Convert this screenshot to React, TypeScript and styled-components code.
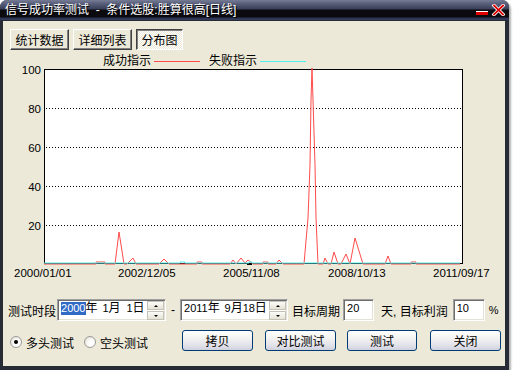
import React from "react";
import styled, { createGlobalStyle } from "styled-components";

const FONT = `"Liberation Sans", "Noto Sans CJK SC", sans-serif`;

const GlobalStyle = createGlobalStyle`
  html, body { margin: 0; padding: 0; background: #ffffff; }
  body { font-family: ${FONT}; font-size: 12px; }
  * { box-sizing: border-box; }
`;

const Window = styled.div`
  width: 509px;
  height: 370px;
  display: flex;
  flex-direction: column;
  background: #272b35;
  border-radius: 7px 7px 0 0;
  box-shadow: 2px 2px 2px rgba(0, 0, 0, 0.3);
  overflow: hidden;
`;

const TitleBar = styled.div`
  height: 20px;
  flex: none;
  display: flex;
  align-items: center;
  padding: 0 4px 0 5px;
  background: linear-gradient(
    #767b95 0px,
    #565c78 4px,
    #3a3f58 9px,
    #0a0a0f 10px,
    #0a0a0f 17px,
    #2b3250 18px,
    #343d5e 20px
  );
  color: #ffffff;
`;

const Title = styled.div`
  flex: 1;
  font-size: 12px;
  line-height: 12px;
  white-space: pre;
  text-shadow: 1px 1px 0 #000;
`;

const Client = styled.div`
  flex: 1;
  margin: 1px 4px 4px 3px;
  background: #ece9d8;
  display: flex;
  flex-direction: column;
`;

const TabRow = styled.div`
  display: flex;
  gap: 4px;
  padding: 8px 0 0 7px;
`;

const TabButton = styled.button<{ $w: number; $active?: boolean }>`
  width: ${(p) => p.$w}px;
  height: 21px;
  padding: 0;
  font: 12px ${FONT};
  color: #000;
  background: ${(p) =>
    p.$active
      ? "conic-gradient(#ffffff 25%, #ece9d8 0 50%, #ffffff 0 75%, #ece9d8 0)"
      : "#ece9d8"};
  background-size: 2px 2px;
  border: 1px solid;
  border-color: ${(p) =>
    p.$active ? "#404040 #ffffff #ffffff #404040" : "#ffffff #404040 #404040 #ffffff"};
  box-shadow: ${(p) => (p.$active ? "inset 1px 1px #808080" : "inset -1px -1px #808080")};
`;

const ChartSvg = styled.svg`
  display: block;
  flex: none;
`;

const Row = styled.div<{ $top: number; $h: number }>`
  display: flex;
  align-items: center;
  height: ${(p) => p.$h}px;
  margin-top: ${(p) => p.$top}px;
  padding-left: 5px;
`;

const Label = styled.span<{ $ml?: number }>`
  margin-left: ${(p) => p.$ml ?? 0}px;
  font-size: 12px;
  white-space: pre;
`;

const Sunken = styled.div<{ $w: number; $ml: number }>`
  width: ${(p) => p.$w}px;
  height: 22px;
  margin-left: ${(p) => p.$ml}px;
  background: #ffffff;
  border: 1px solid;
  border-color: #a0a0a0 #ffffff #ffffff #a0a0a0;
  box-shadow: inset 1px 1px #6e6e6e, inset -1px -1px #e4e2d6;
  display: flex;
  align-items: flex-start;
  padding: 2px 0 0 3px;
`;

const Digits = styled.span<{ $w?: number; $sel?: boolean }>`
  display: inline-block;
  ${(p) => (p.$w ? `width: ${p.$w}px; text-align: right;` : "")}
  font-size: 11px;
  line-height: 13px;
  color: ${(p) => (p.$sel ? "#ffffff" : "#000")};
  background: ${(p) => (p.$sel ? "#316ac5" : "transparent")};
`;

const Unit = styled.span`
  font-size: 12px;
  line-height: 13px;
`;

const Spinner = styled.div`
  margin: -1px 1px 0 auto;
  width: 17px;
  height: 19px;
  display: flex;
  flex-direction: column;
  gap: 1px;
`;

const SpinBtn = styled.div<{ $up?: boolean }>`
  flex: 1;
  background: linear-gradient(#fbfbf8, #e6e3d6);
  border: 1px solid #c4c2b6;
  display: flex;
  align-items: center;
  justify-content: center;
  &::after {
    content: "";
    width: 0;
    height: 0;
    border-left: 2px solid transparent;
    border-right: 2px solid transparent;
    ${(p) => (p.$up ? "border-bottom: 2px solid #000;" : "border-top: 2px solid #000;")}
  }
`;

const Dash = styled.span`
  width: 14px;
  text-align: center;
  font-size: 12px;
`;

const RadioItem = styled.label<{ $ml: number }>`
  display: flex;
  align-items: center;
  gap: 4px;
  margin: 3px 0 0 ${(p) => p.$ml}px;
  font-size: 12px;
`;

const RadioDot = styled.span<{ $checked?: boolean }>`
  width: 12px;
  height: 12px;
  border-radius: 50%;
  border: 1px solid #9a9a9a;
  background: radial-gradient(circle at 65% 65%, #ffffff 30%, #dcd9cc 100%);
  display: flex;
  align-items: center;
  justify-content: center;
  &::after {
    content: "";
    width: 4px;
    height: 4px;
    border-radius: 50%;
    background: ${(p) => (p.$checked ? "#000" : "transparent")};
  }
`;

const PushButton = styled.button<{ $w: number; $ml: number }>`
  width: ${(p) => p.$w}px;
  height: 21px;
  margin-left: ${(p) => p.$ml}px;
  padding: 0;
  font: 12px ${FONT};
  color: #000;
  border: 1px solid #003c74;
  border-radius: 3px;
  background: linear-gradient(#ffffff 0%, #f4f4f2 35%, #e2e2ea 75%, #cfd1de 100%);
`;

const toY = (v: number) => 264 - v * 1.95;

const redPts: [number, number][] = [
  [44, 264], [96, 264], [96, 262], [105, 262], [105, 264], [115, 264], [119, 232],
  [124, 264], [127, 264], [133, 258], [136, 264], [159, 264], [164, 259], [169, 264],
  [180, 264], [197, 264], [197, 262], [202, 262], [202, 264], [230, 264], [233, 260],
  [236, 264], [241, 258], [245, 263], [248, 260], [253, 264], [263, 264], [263, 262],
  [268, 262], [268, 264], [276, 264], [279, 260], [283, 264], [304, 264], [308, 218],
  [310, 165], [311, 100], [312, 68], [313, 100], [315, 165], [316, 218], [318, 264],
  [323, 264], [325, 258], [328, 264], [331, 264], [334, 252], [338, 264], [341, 264],
  [346, 254], [350, 264], [355, 238], [363, 264], [385, 264], [388, 256], [391, 264],
  [411, 264], [411, 262], [416, 262], [416, 264], [460, 264],
];

const cyanPts: [number, number][] = [
  [44, 263], [180, 263], [180, 262], [185, 262], [185, 263], [249, 263], [249, 262],
  [252, 262], [252, 263], [460, 263],
];

const pts = (list: [number, number][]) => list.map(([x, y]) => `${x},${y}`).join(" ");

const xLabels: [number, string][] = [
  [14, "2000/01/01"],
  [118, "2002/12/05"],
  [223, "2005/11/08"],
  [328, "2008/10/13"],
  [433, "2011/09/17"],
];

function Chart() {
  return (
    <ChartSvg width={502} height={240} viewBox="3 50 502 240">
      <g fontFamily={FONT} fontSize={12} fill="#000">
        <text x={103} y={65}>成功指示</text>
        <text x={209} y={65}>失败指示</text>
      </g>
      <line x1={154} y1={61.5} x2={200} y2={61.5} stroke="#ff4b4b" />
      <line x1={260} y1={61.5} x2={306} y2={61.5} stroke="#4ff0f0" />
      <rect x={44.5} y={69.5} width={418} height={194} fill="#ffffff" stroke="#000" />
      {[20, 40, 60, 80].map((v) => (
        <line
          key={v}
          x1={46}
          x2={462}
          y1={toY(v) + 0.5}
          y2={toY(v) + 0.5}
          stroke="#000"
          strokeDasharray="1 2"
        />
      ))}
      <g fontFamily={FONT} fontSize={11.5} fill="#000">
        {[100, 80, 60, 40, 20].map((v) => (
          <text key={v} x={41} y={toY(v) + 4.5} textAnchor="end">
            {v}
          </text>
        ))}
        {xLabels.map(([x, t]) => (
          <text key={t} x={x} y={276.5}>
            {t}
          </text>
        ))}
      </g>
      <polyline points={pts(redPts)} fill="none" stroke="#ff4b4b" strokeWidth={1} />
      <polyline points={pts(cyanPts)} fill="none" stroke="#4ff0f0" strokeWidth={1} />
      <line x1={247} y1={264.5} x2={252} y2={264.5} stroke="#000" />
    </ChartSvg>
  );
}

function WinButtons() {
  return (
    <svg width={30} height={12} viewBox="0 0 30 12">
      <rect x={1} y={7} width={12} height={4} fill="#e00000" />
      <rect x={1} y={7} width={12} height={1} fill="#ffffff" />
      <g strokeLinecap="square">
        <line x1={19} y1={1.5} x2={28} y2={10.5} stroke="#ffffff" strokeWidth={3.4} />
        <line x1={28} y1={1.5} x2={19} y2={10.5} stroke="#ffffff" strokeWidth={3.4} />
        <line x1={19} y1={1.5} x2={28} y2={10.5} stroke="#e00000" strokeWidth={1.8} />
        <line x1={28} y1={1.5} x2={19} y2={10.5} stroke="#e00000" strokeWidth={1.8} />
      </g>
    </svg>
  );
}

function DateField({
  ml,
  year,
  month,
  day,
  selected,
}: {
  ml: number;
  year: string;
  month: string;
  day: string;
  selected?: boolean;
}) {
  return (
    <Sunken $w={selected ? 109 : 108} $ml={ml}>
      <Digits $sel={selected}>{year}</Digits>
      <Unit>年</Unit>
      <Digits $w={11}>{month}</Digits>
      <Unit>月</Unit>
      <Digits $w={12}>{day}</Digits>
      <Unit>日</Unit>
      <Spinner>
        <SpinBtn $up />
        <SpinBtn />
      </Spinner>
    </Sunken>
  );
}

export default function App() {
  return (
    <>
      <GlobalStyle />
      <Window>
        <TitleBar>
          <Title>信号成功率测试  -  条件选股:胜算很高[日线]</Title>
          <WinButtons />
        </TitleBar>
        <Client>
          <TabRow>
            <TabButton $w={59}>统计数据</TabButton>
            <TabButton $w={59}>详细列表</TabButton>
            <TabButton $w={47} $active>
              分布图
            </TabButton>
          </TabRow>
          <Chart />
          <Row $top={9} $h={22}>
            <Label>测试时段</Label>
            <DateField ml={1} year="2000" month="1" day="1" selected />
            <Dash>-</Dash>
            <DateField ml={0} year="2011" month="9" day="18" />
            <Label $ml={4}>目标周期</Label>
            <Sunken $w={31} $ml={3}>
              <Digits>20</Digits>
            </Sunken>
            <Label $ml={7}>天, 目标利润</Label>
            <Sunken $w={32} $ml={5}>
              <Digits>10</Digits>
            </Sunken>
            <Label $ml={4}>
              <Digits>%</Digits>
            </Label>
          </Row>
          <Row $top={9} $h={21}>
            <RadioItem $ml={2}>
              <RadioDot $checked />
              多头测试
            </RadioItem>
            <RadioItem $ml={10}>
              <RadioDot />
              空头测试
            </RadioItem>
            <PushButton $w={71} $ml={34}>拷贝</PushButton>
            <PushButton $w={71} $ml={12}>对比测试</PushButton>
            <PushButton $w={70} $ml={11}>测试</PushButton>
            <PushButton $w={71} $ml={13}>关闭</PushButton>
          </Row>
        </Client>
      </Window>
    </>
  );
}
